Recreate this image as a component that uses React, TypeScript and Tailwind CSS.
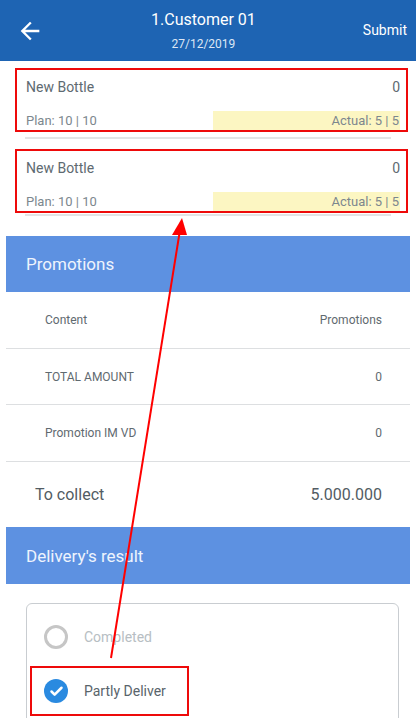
import { Check } from 'lucide-react'

const FONT = { fontFamily: 'Roboto, "Liberation Sans", sans-serif' }

// ── Plan / actual card ──

function BottleCard() {
  return (
    <div className="ml-[15px] mr-[8px] h-[64px] border-2 border-[#ee0a0a] flex flex-col justify-between">
      <div className="flex items-center justify-between pl-[9px] pr-[6px] pt-[7px] text-[14px] leading-[20px] text-[#5e6a71]">
        <span>New Bottle</span>
        <span>0</span>
      </div>
      <div className="flex items-center h-[19px] pl-[9px] pr-[6px] text-[13px] text-[#7c878e]">
        <span className="flex-1">Plan: 10 | 10</span>
        <span className="w-[187px] h-full bg-[#fcf6c2] flex items-center justify-end pr-[1px]">Actual: 5 | 5</span>
      </div>
    </div>
  )
}

function SectionHeader({ title, h }: { title: string; h: string }) {
  return (
    <div className={`mx-[6px] ${h} bg-[#5d91e1] flex items-center pl-[20px] pt-[2px] text-[17px] text-[#eef4fd]`}>
      {title}
    </div>
  )
}

function PromoRow({ label, value, h }: { label: string; value: string; h: string }) {
  return (
    <div className={`mx-[6px] ${h} border-b border-[#dddfe1] flex items-center justify-between pl-[39px] pr-[28px] text-[12px] text-[#5f6a70]`}>
      <span>{label}</span>
      <span>{value}</span>
    </div>
  )
}

export default function App() {
  return (
    <div className="relative w-[416px] h-[718px] overflow-hidden bg-white" style={FONT}>
      {/* Top bar */}
      <div className="h-[61px] bg-[#1e64b3] flex items-center justify-between px-[16px] text-white">
        <svg width="28" height="28" viewBox="0 0 24 24" fill="white">
          <path d="M20 11H7.83l5.59-5.59L12 4l-8 8 8 8 1.41-1.41L7.83 13H20v-2z" />
        </svg>
        <div className="flex flex-col items-center pt-[1px]">
          <span className="text-[16px] leading-[20px]">1.Customer 01</span>
          <span className="text-[12px] leading-[16px] mt-[6px] text-[#dce7f5]">27/12/2019</span>
        </div>
        <span className="text-[14px] mr-[-7px]">Submit</span>
      </div>

      {/* Bottles */}
      <div className="pt-[7px]">
        <BottleCard />
        <div className="mx-[25px] mt-[5px] h-[2px] bg-[#e3e4e5]" />
        <div className="mt-[10px]">
          <BottleCard />
        </div>
        <div className="mx-[25px] mt-[1px] h-[2px] bg-[#e3e4e5]" />
      </div>

      {/* Promotions */}
      <div className="mt-[20px]">
        <SectionHeader title="Promotions" h="h-[56px]" />
        <PromoRow label="Content" value="Promotions" h="h-[57px]" />
        <PromoRow label="TOTAL AMOUNT" value="0" h="h-[56px]" />
        <PromoRow label="Promotion IM VD" value="0" h="h-[57px]" />
        <div className="mx-[6px] h-[65px] flex items-center justify-between pl-[29px] pr-[28px] text-[16px] text-[#525c63]">
          <span>To collect</span>
          <span>5.000.000</span>
        </div>
      </div>

      {/* Delivery result */}
      <SectionHeader title="Delivery's result" h="h-[57px]" />
      <div className="mt-[19px] ml-[26px] mr-[17px] h-[140px] border border-[#c9cdd1] rounded-[6px] pt-[8px]">
        <div className="h-[50px] flex items-center pl-[17px]">
          <span className="w-[24px] h-[24px] rounded-full border-[3px] border-[#c6c6c6]" />
          <span className="ml-[16px] text-[14px] text-[#b7bec3]">Completed</span>
        </div>
        <div className="mt-[4px] ml-[3px] w-[159px] h-[50px] border-2 border-[#ee0a0a] flex items-center pl-[12px]">
          <span className="w-[24px] h-[24px] rounded-full bg-[#2a8ae0] flex items-center justify-center">
            <Check size={15} strokeWidth={4} color="white" />
          </span>
          <span className="ml-[16px] text-[14px] text-[#59646b]">Partly Deliver</span>
        </div>
      </div>

      {/* Annotation arrow */}
      <svg className="absolute inset-0 pointer-events-none" width="416" height="718">
        <line x1="111" y1="658" x2="180" y2="230" stroke="#ff0000" strokeWidth="2" />
        <polygon points="182,218 172,235 187,235" fill="#ff0000" />
      </svg>
    </div>
  )
}
